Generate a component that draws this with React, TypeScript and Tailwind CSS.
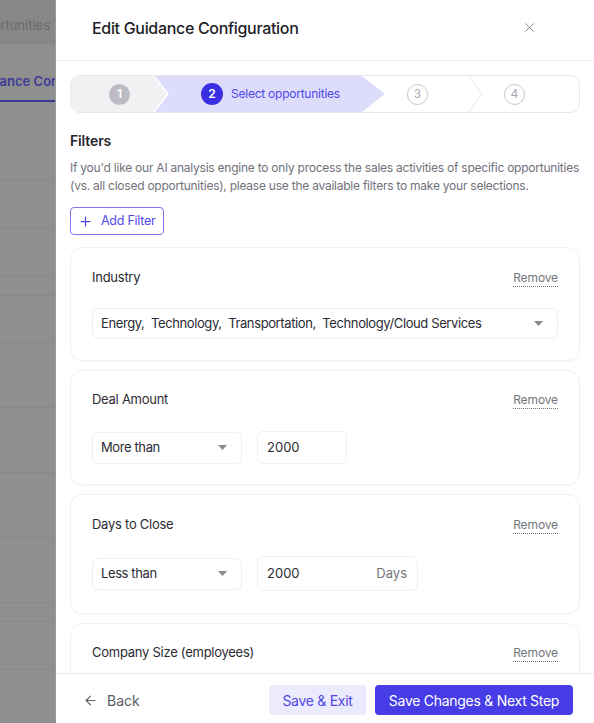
import React from 'react'
import { X, Plus, ArrowLeft } from 'lucide-react'

const font = { fontFamily: 'Inter, "Noto Sans", sans-serif' }

const Caret = () => (
  <svg width="9" height="5" viewBox="0 0 9 5" className="shrink-0">
    <path d="M0 0h9L4.5 5z" fill="#8a8a93" />
  </svg>
)

const CardHeader = ({ label }: { label: string }) => (
  <div className="flex items-center justify-between h-5">
    <span className="text-[13px] text-[#2b2b33] tracking-[-0.02em]">{label}</span>
    <span className="text-[12px] text-[#74747c] underline decoration-dotted decoration-[#74747c] underline-offset-[4px] tracking-[-0.01em]">
      Remove
    </span>
  </div>
)

const SelectBox = ({ value, className }: { value: string; className: string }) => (
  <div className={`flex items-center justify-between border border-[#efeff2] rounded-md pl-[8px] pr-[14px] text-[13px] text-[#2b2b33] tracking-[-0.03em] ${className}`}>
    <span>{value}</span>
    <Caret />
  </div>
)

const BackgroundStrip = () => (
  <div className="w-[56px] shrink-0 bg-[#8f8f8f] overflow-hidden flex flex-col border-r border-[#9a9a9a]">
    <div className="h-[44px] bg-[#878787] flex justify-end pt-[16px]">
      <span className="text-[13px] leading-[18px] text-[#6b6b6b] whitespace-nowrap pr-[5px]">ortunities</span>
    </div>
    <div className="h-[58px] flex items-end justify-end border-b-2 border-[#3b3a96]">
      <span className="text-[13px] leading-[18px] font-semibold text-[#3b3a96] whitespace-nowrap pb-[10px] -mr-[4px]">ance Con</span>
    </div>
    <div className="h-[78px] border-b border-[#888888]" />
    <div className="h-[48px] border-b border-[#888888]" />
    <div className="h-[48px] border-b border-[#888888]" />
    <div className="h-[20px] border-b border-[#888888]" />
    <div className="h-[47px] border-b border-[#888888]" />
    <div className="h-[65px] border-b border-[#888888]" />
    <div className="h-[65px] border-b border-[#888888]" />
    <div className="h-[65px] border-b border-[#888888]" />
    <div className="h-[65px] border-b border-[#888888]" />
    <div className="h-[19px] border-b border-[#888888]" />
    <div className="h-[48px] border-b border-[#888888]" />
  </div>
)

const Stepper = () => (
  <div className="mt-[14px] h-[38px] border border-[#e8e8ec] rounded-[10px] overflow-hidden flex bg-white">
    <div className="w-[96px] shrink-0 bg-[#f1f1f3] flex items-center pl-[38px] [clip-path:polygon(0_0,calc(100%-14px)_0,100%_50%,calc(100%-14px)_100%,0_100%)]">
      <span className="w-[21px] h-[21px] rounded-full bg-[#bdbcc4] text-white text-[12px] font-semibold flex items-center justify-center">1</span>
    </div>
    <div className="w-[230px] shrink-0 -ml-[12px] bg-[#dddcfb] flex items-center pl-[46px] gap-[8px] [clip-path:polygon(0_0,calc(100%-23px)_0,100%_50%,calc(100%-23px)_100%,0_100%,14px_50%)]">
      <span className="w-[22px] h-[22px] rounded-full bg-[#3b2fe3] text-white text-[12px] font-semibold flex items-center justify-center">2</span>
      <span className="text-[12px] text-[#5048e8] tracking-[-0.02em]">Select opportunities</span>
    </div>
    <div className="w-[83px] shrink-0 flex items-center pl-[22px]">
      <span className="w-[21px] h-[21px] rounded-full border-[1.5px] border-[#c6c6cc] text-[#a9a9b0] text-[12px] flex items-center justify-center">3</span>
    </div>
    <svg width="15" height="36" viewBox="0 0 15 36" className="shrink-0">
      <path d="M0.5 0L14 18L0.5 36" fill="none" stroke="#ececef" strokeWidth="1.2" />
    </svg>
    <div className="flex-1 flex items-center pl-[21px]">
      <span className="w-[21px] h-[21px] rounded-full border-[1.5px] border-[#c6c6cc] text-[#a9a9b0] text-[12px] flex items-center justify-center">4</span>
    </div>
  </div>
)

export default function App() {
  return (
    <div className="w-[594px] h-[723px] flex overflow-hidden bg-white" style={font}>
      <BackgroundStrip />
      {/* Drawer */}
      <div className="flex-1 flex flex-col bg-white min-w-0">
        <div className="h-[61px] shrink-0 border-b border-[#ededf0] flex items-center justify-between pl-[36px] pr-[57px] pb-[5px]">
          <h1 className="text-[16px] font-medium text-[#1f1f29] tracking-[-0.02em]">Edit Guidance Configuration</h1>
          <X className="w-[15px] h-[15px] text-[#8a8a92]" strokeWidth={1.6} />
        </div>

        <div className="flex-1 overflow-hidden px-[14px]">
          <Stepper />

          <h2 className="mt-[18px] text-[14px] leading-5 font-semibold text-[#26262e] tracking-[-0.01em]">Filters</h2>
          <p className="mt-[8px] text-[12px] leading-[18px] text-[#71717a] tracking-[-0.02em]">
            If you'd like our AI analysis engine to only process the sales activities of specific opportunities (vs. all closed opportunities), please use the available filters to make your selections.
          </p>

          <button className="mt-[12px] h-[28px] px-[7px] flex items-center gap-[8px] border border-[#7b74ee] rounded-[4px] text-[12.5px] text-[#5048e8] tracking-[-0.02em]">
            <Plus className="w-[15px] h-[15px]" strokeWidth={2} />
            Add Filter
          </button>

          <div className="mt-[12px] flex flex-col gap-[9px]">
            <div className="border border-[#f0f0f3] rounded-[12px] px-[21px] pt-[20px] pb-[21px] shadow-[0_1px_2px_rgba(0,0,0,0.03)]">
              <CardHeader label="Industry" />
              <SelectBox
                value="Energy,  Technology,  Transportation,  Technology/Cloud Services"
                className="mt-[20px] h-[31px] whitespace-pre"
              />
            </div>

            <div className="border border-[#f0f0f3] rounded-[12px] px-[21px] pt-[19px] pb-[20px] shadow-[0_1px_2px_rgba(0,0,0,0.03)]">
              <CardHeader label="Deal Amount" />
              <div className="mt-[21px] flex items-center gap-[15px]">
                <SelectBox value="More than" className="w-[150px] h-[32px]" />
                <div className="w-[90px] h-[33px] border border-[#efeff2] rounded-md flex items-center pl-[9px] text-[13px] text-[#2b2b33]">2000</div>
              </div>
            </div>

            <div className="border border-[#f0f0f3] rounded-[12px] px-[21px] pt-[20px] pb-[22px] shadow-[0_1px_2px_rgba(0,0,0,0.03)]">
              <CardHeader label="Days to Close" />
              <div className="mt-[21px] flex items-center gap-[15px]">
                <SelectBox value="Less than" className="w-[150px] h-[32px]" />
                <div className="w-[161px] h-[35px] border border-[#efeff2] rounded-md flex items-center justify-between pl-[9px] pr-[10px] text-[13px] text-[#2b2b33]">
                  <span>2000</span>
                  <span className="text-[#74747c]">Days</span>
                </div>
              </div>
            </div>

            <div className="border border-[#f0f0f3] rounded-[12px] px-[21px] pt-[19px] pb-[60px]">
              <CardHeader label="Company Size (employees)" />
            </div>
          </div>
        </div>

        {/* Footer */}
        <div className="h-[50px] shrink-0 border-t border-[#ebebef] flex items-center justify-between pl-[27px] pr-[21px] pt-[3px] bg-white">
          <div className="flex items-center gap-[9px] text-[14px] text-[#5c5c66]">
            <ArrowLeft className="w-[15px] h-[15px]" strokeWidth={1.8} />
            <span>Back</span>
          </div>
          <div className="flex items-center gap-[9px]">
            <button className="h-[30px] w-[97px] rounded-[4px] bg-[#ecebfd] text-[14px] text-[#4f46e5] tracking-[-0.02em]">Save &amp; Exit</button>
            <button className="h-[30px] w-[198px] rounded-[4px] bg-[#463de6] text-[14px] text-white tracking-[-0.02em]">Save Changes &amp; Next Step</button>
          </div>
        </div>
      </div>
    </div>
  )
}
